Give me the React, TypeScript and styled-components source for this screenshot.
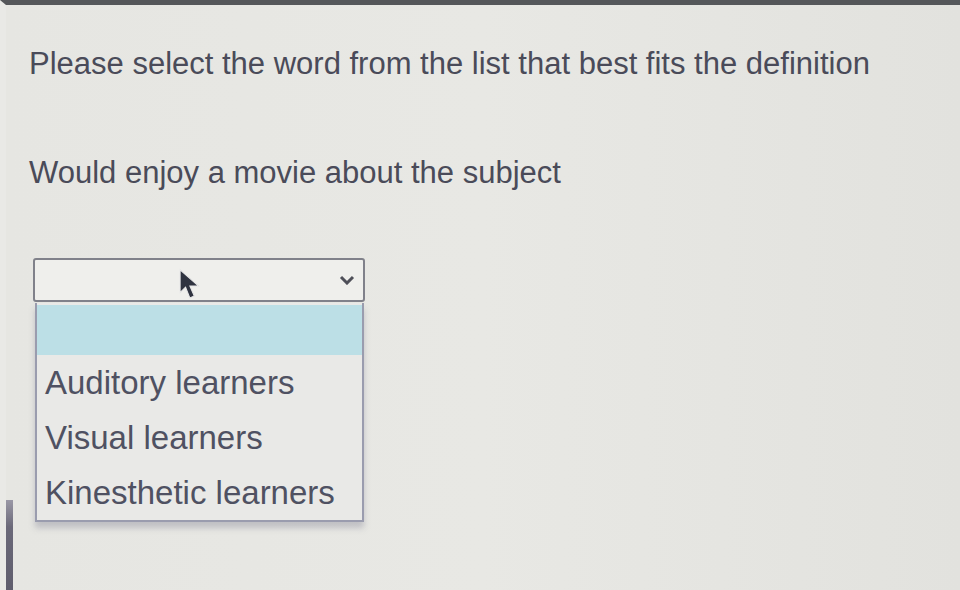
import styled, { createGlobalStyle } from "styled-components";

const GlobalStyle = createGlobalStyle`
  html, body {
    margin: 0;
    padding: 0;
    background: #e5e5e1;
  }
  body {
    font-family: "Liberation Sans", Arial, sans-serif;
  }
`;

const Screen = styled.div`
  width: 960px;
  height: 590px;
  box-sizing: border-box;
  border-top: 5px solid #55575a;
  border-left: 6px solid #e9e9e6;
  background: linear-gradient(90deg, #e6e6e2 0%, #e8e8e4 50%, #e2e2de 100%);
  position: relative;
  overflow: hidden;
  padding: 0 0 0 23px;
`;

const EdgeStrip = styled.div`
  position: absolute;
  left: 0;
  top: 495px;
  bottom: 0;
  width: 7px;
  background: linear-gradient(180deg, #9a98a6 0%, #6b6979 30%, #5f5d6d 100%);
`;

const Prompt = styled.p`
  margin: 41px 0 0;
  font-size: 31px;
  line-height: 36px;
  color: #4a4b59;
`;

const Definition = styled(Prompt)`
  margin-top: 73px;
`;

const SelectArea = styled.div`
  margin-top: 67px;
  margin-left: 4px;
  width: 332px;
  position: relative;
`;

const SelectBox = styled.div`
  height: 44px;
  box-sizing: border-box;
  border: 2px solid #80818a;
  border-radius: 3px;
  background: #efefec;
  display: flex;
  align-items: center;
  justify-content: flex-end;
  padding-right: 8px;
`;

const List = styled.div`
  margin: 1px 1px 0 2px;
  padding-top: 2px;
  border: 2px solid #9a9cae;
  border-top: none;
  background: #e9e9e7;
  box-shadow: 0 6px 6px rgba(120, 120, 140, 0.35);
`;

const Option = styled.div<{ $active?: boolean }>`
  height: ${(p) => (p.$active ? "50px" : "55px")};
  background: ${(p) => (p.$active ? "#bcdfe6" : "transparent")};
  padding-left: 8px;
  display: flex;
  align-items: center;
  font-size: 33px;
  color: #4f5162;
`;

const Pointer = styled.svg`
  position: absolute;
  left: 146px;
  top: 9px;
`;

export default function App() {
  return (
    <>
      <GlobalStyle />
      <Screen>
        <EdgeStrip />
        <Prompt>Please select the word from the list that best fits the definition</Prompt>
        <Definition>Would enjoy a movie about the subject</Definition>
        <SelectArea>
          <SelectBox>
            <svg width="16" height="10" viewBox="0 0 16 10">
              <path d="M2 2 L8 8 L14 2" fill="none" stroke="#4e4f58" strokeWidth="3" />
            </svg>
          </SelectBox>
          <List>
            <Option $active />
            <Option>Auditory learners</Option>
            <Option>Visual learners</Option>
            <Option>Kinesthetic learners</Option>
          </List>
          <Pointer width="24" height="36" viewBox="0 0 22 30">
            <path
              d="M1 1 L1 22 L6 17 L10 27 L14 25 L10 16 L18 16 Z"
              fill="#2f3340"
              stroke="#e8e8e8"
              strokeWidth="1"
            />
          </Pointer>
        </SelectArea>
      </Screen>
    </>
  );
}
